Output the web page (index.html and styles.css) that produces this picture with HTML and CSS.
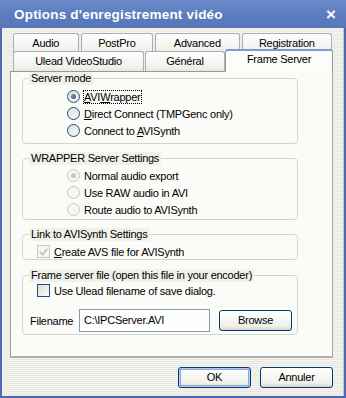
FILE: index.html
```html
<!DOCTYPE html>
<html>
<head>
    <title>Options d'enregistrement vidéo</title>
    <link rel="stylesheet" href="styles.css">
</head>
<body>

<div class="window">
    <div class="titlebar">
        <span class="title">Options d'enregistrement vidéo</span>
        <span class="close">×</span>
    </div>

    <div class="client">
        <div class="tabs">
            <div class="tabrow back">
                <div class="tab w-audio">Audio</div>
                <div class="tab w-postpro">PostPro</div>
                <div class="tab w-advanced">Advanced</div>
                <div class="tab w-registration">Registration</div>
            </div>
            <div class="tabrow front">
                <div class="tab w-ulead">Ulead VideoStudio</div>
                <div class="tab w-general">Général</div>
                <div class="tab w-frame active">Frame Server</div>
            </div>
        </div>

        <div class="panel">
            <fieldset class="group g-mode">
                <legend>Server mode</legend>
                <label class="opt"><span class="radio on"></span><span class="focus"><u>A</u>VI<u>W</u>rapper</span></label>
                <label class="opt"><span class="radio"></span><span><u>D</u>irect Connect (TMPGenc only)</span></label>
                <label class="opt"><span class="radio"></span><span>Connect to <u>A</u>VISynth</span></label>
            </fieldset>

            <fieldset class="group g-wrapper">
                <legend>WRAPPER Server Settings</legend>
                <label class="opt off"><span class="radio on"></span><span>Normal audio export</span></label>
                <label class="opt off"><span class="radio"></span><span>Use RAW audio in AVI</span></label>
                <label class="opt off"><span class="radio"></span><span>Route audio to AVISynth</span></label>
            </fieldset>

            <fieldset class="group g-link">
                <legend>Link to AVISynth Settings</legend>
                <label class="check"><span class="box on off"></span><span><u>C</u>reate AVS file for AVISynth</span></label>
            </fieldset>

            <fieldset class="group g-file">
                <legend>Frame server file (open this file in your encoder)</legend>
                <label class="check"><span class="box"></span><span>Use Ulead filename of save dialog.</span></label>
                <div class="filerow">
                    <span class="fname">Filename</span>
                    <span class="field">C:\IPCServer.AVI</span>
                    <span class="button browse">Browse</span>
                </div>
            </fieldset>
        </div>

        <div class="actions">
            <span class="button default">OK</span>
            <span class="button">Annuler</span>
        </div>
    </div>
</div>

</body>
</html>
```

FILE: styles.css
```css
html, body {
    margin: 0;
    padding: 0;
}
body {
    font-family: "Liberation Sans", Arial, sans-serif;
    font-size: 11px;
    letter-spacing: -0.25px;
    color: #000;
    background: #fff;
}

.window {
    width: 346px;
    height: 398px;
    box-sizing: border-box;
    display: flex;
    flex-direction: column;
    background: #4d68b4;
    padding: 0 2px 2px 2px;
}

.titlebar {
    height: 28px;
    margin: 0 -2px;
    display: flex;
    align-items: center;
    justify-content: space-between;
    padding: 0 10px 0 14px;
    background: linear-gradient(#6a8acb, #5a7bbd 60%, #5677b8);
    color: #fff;
}
.title {
    font-weight: bold;
    font-size: 13.5px;
    letter-spacing: 0.2px;
}
.close {
    font-size: 17px;
    font-weight: bold;
    line-height: 1;
    letter-spacing: 0;
}

.client {
    flex: 1;
    display: flex;
    flex-direction: column;
    padding: 0 10px 0 8px;
    background: repeating-linear-gradient(#f5f4ef 0 1px, #e9e8e0 1px 2px);
    border-right: 1px solid #c9c8c0;
}

/* tabs */
.tabs {
    padding: 5px 0 0 3px;
}
.tabrow {
    display: flex;
    gap: 1px;
}
.tabrow.front {
    margin-top: -2px;
}
.tab {
    box-sizing: border-box;
    height: 20px;
    border: 1px solid #a9aebb;
    border-bottom: none;
    border-radius: 3px 3px 0 0;
    background: linear-gradient(#fefefe, #f4f3ee 70%, #e9e8e0);
    text-align: center;
    line-height: 18px;
}
.front .tab { line-height: 19px; }
.back .tab { margin-right: 1px; }
.w-audio { width: 66px; }
.w-postpro { width: 73px; }
.w-advanced { width: 85px; }
.w-registration { width: 91px; }
.w-ulead { width: 131px; }
.w-general { width: 80px; }
.w-frame { width: 108px; }
.front .tab.active {
    height: 23px;
    margin-top: -2px;
    margin-left: -1px;
    position: relative;
    z-index: 1;
    background: #fcfcfa;
    border-color: #919b9c;
    border-top: 2px solid #7b9ad4;
    line-height: 16px;
    margin-bottom: -2px;
}

.panel {
    box-sizing: border-box;
    height: 287px;
    border: 1px solid #919b9c;
    border-right-color: #a2a8ab;
    border-bottom: 2px solid #aeb2b3;
    background: #fbfbf8;
    padding: 0 34px 0 11px;
    display: flex;
    flex-direction: column;
}

.group {
    margin: 0;
    border: 1px solid #d6d5ca;
    border-radius: 4px;
    padding: 0;
    display: flex;
    flex-direction: column;
}
.group legend {
    padding: 0 2px;
    margin-left: 6px;
    line-height: 13px;
    background: #f1f1ec;
}
.g-mode { height: 67px; padding-top: 3px; margin-top: 0; }
.g-wrapper { height: 64px; margin-top: 8px; padding-top: 2px; }
.g-link { height: 30px; margin-top: 8px; }
.g-file { height: 64px; margin-top: 9px; }

.opt {
    display: flex;
    align-items: center;
    height: 17px;
    padding-left: 44px;
    gap: 4px;
}
.radio {
    box-sizing: border-box;
    width: 13px;
    height: 13px;
    border-radius: 50%;
    border: 1px solid #1c5180;
    background: radial-gradient(circle at 65% 65%, #f6f6f3, #dcdcd4);
    position: relative;
}
.radio.on::after {
    content: "";
    position: absolute;
    left: 3px;
    top: 3px;
    width: 5px;
    height: 5px;
    border-radius: 50%;
    background: radial-gradient(circle at 40% 40%, #7c93c2, #27417c);
}
.opt.off .radio {
    border-color: #cac8bb;
    background: #f6f6f2;
}
.opt.off .radio.on::after {
    background: #cac8bb;
}
.focus {
    outline: 1px dotted #000;
    outline-offset: 0;
    padding-right: 1px;
}
u { text-decoration: underline; text-underline-offset: 1px; }

.check {
    display: flex;
    align-items: center;
    gap: 4px;
    height: 17px;
    padding-left: 14px;
}
.g-link .check { margin-top: 2px; }
.box {
    box-sizing: border-box;
    width: 13px;
    height: 13px;
    border: 1px solid #1c5180;
    background: linear-gradient(135deg, #dcdcd4, #fafaf8);
    position: relative;
}
.box.off {
    border-color: #cac8bb;
    background: #f6f6f2;
}
.box.on::after {
    content: "";
    position: absolute;
    left: 3px;
    top: 1px;
    width: 3px;
    height: 6px;
    border: solid #c9c8bc;
    border-width: 0 2px 2px 0;
    transform: rotate(40deg);
}

.filerow {
    display: flex;
    align-items: center;
    margin-top: 10px;
    padding-left: 7px;
}
.fname {
    width: 49px;
}
.field {
    box-sizing: border-box;
    width: 131px;
    height: 23px;
    border: 1px solid #7f9db9;
    background: #fefefc;
    padding: 0 4px;
    line-height: 21px;
}

.button {
    box-sizing: border-box;
    display: inline-block;
    width: 73px;
    height: 21px;
    border: 1px solid #003c74;
    border-radius: 3px;
    background: linear-gradient(#ffffff, #f0f0ea 80%, #d6d0c5);
    text-align: center;
    line-height: 19px;
}
.browse {
    margin-left: 9px;
    width: 73px;
}
.default {
    box-shadow: inset 0 0 0 1px #b6c8ec, inset 0 0 0 2px #8fa9dd;
}

.actions {
    display: flex;
    justify-content: flex-end;
    gap: 9px;
    padding-top: 9px;
    margin-right: -10px;
    padding-right: 10px;
}
```
